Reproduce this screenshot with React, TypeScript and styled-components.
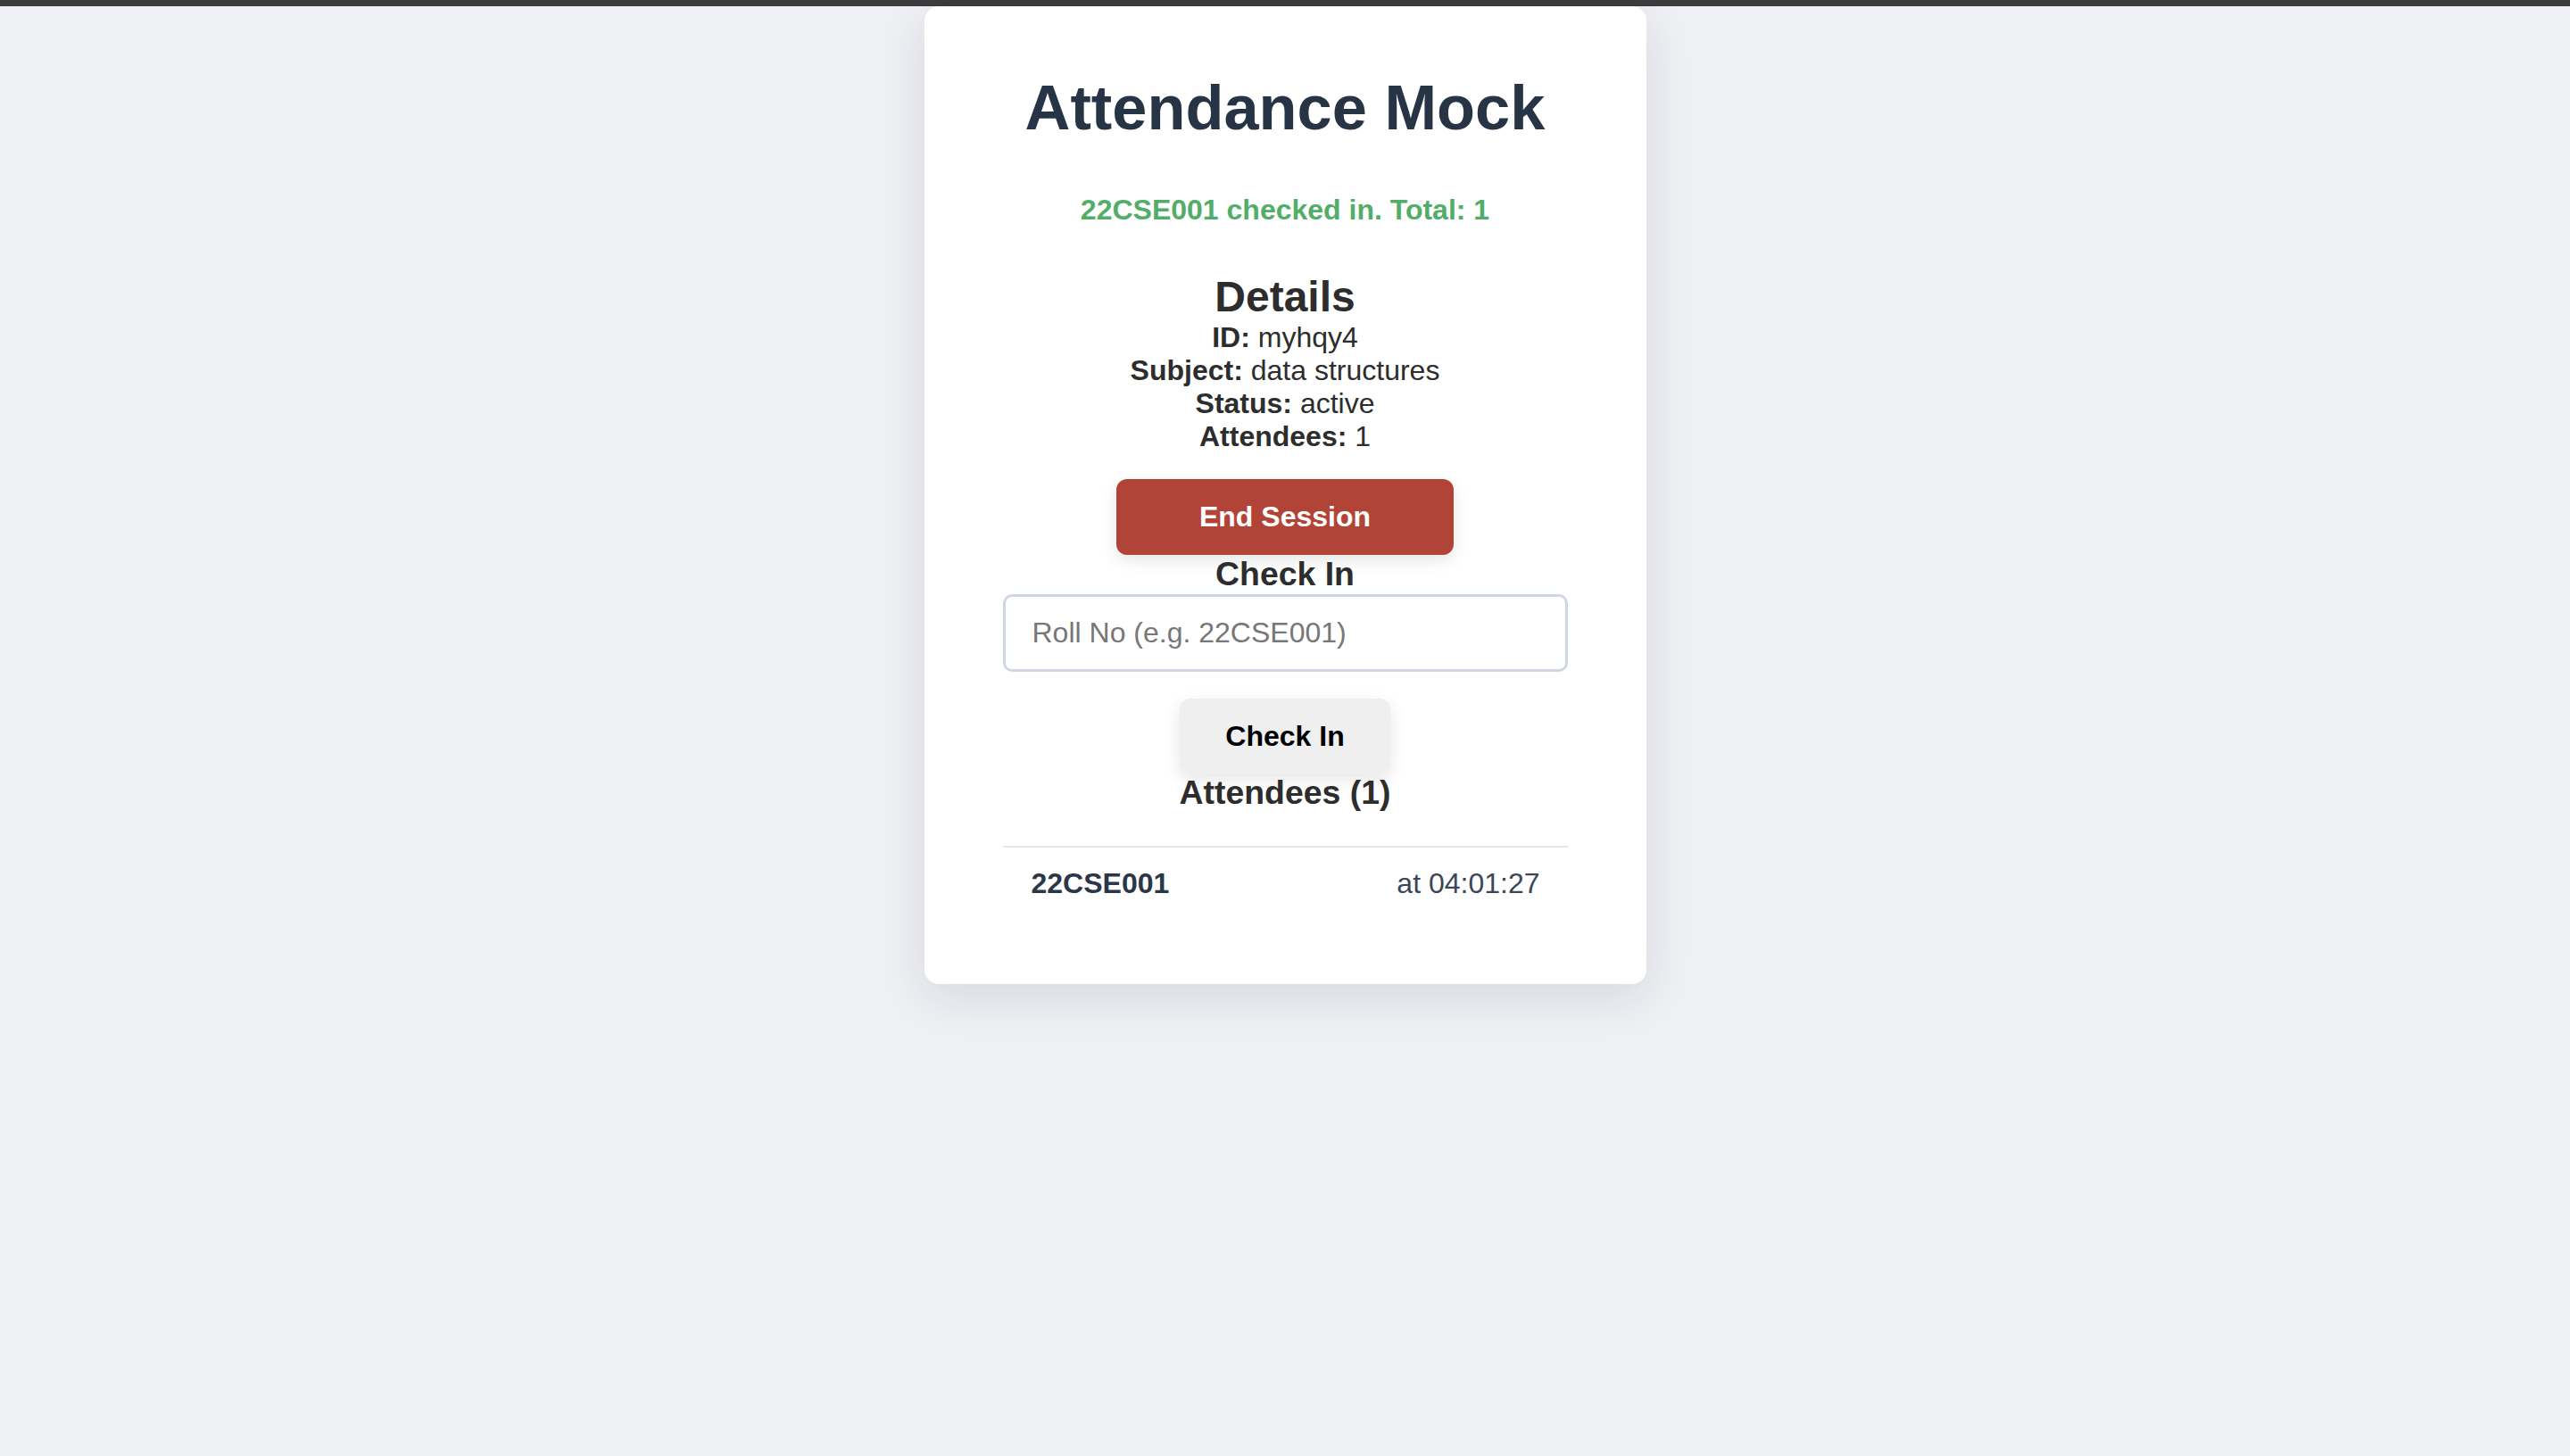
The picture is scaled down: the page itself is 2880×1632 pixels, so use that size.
import React from "react";
import styled, { createGlobalStyle } from "styled-components";

const Global = createGlobalStyle`
  html, body {
    margin: 0;
    padding: 0;
    background: #eff0f4;
    font-family: "Liberation Sans", Arial, Helvetica, sans-serif;
  }
  * { box-sizing: border-box; }
`;

const Page = styled.div`
  min-height: 1632px;
  display: flex;
  flex-direction: column;
  align-items: center;
  background: #eff0f4;
`;

const TopBar = styled.div`
  align-self: stretch;
  height: 7px;
  background: #3c3c3c;
`;

const Card = styled.main`
  width: 809px;
  background: #ffffff;
  border-radius: 16px;
  box-shadow: 0 14px 52px rgba(20, 30, 50, 0.11);
  padding: 73px 88px 72px;
  display: flex;
  flex-direction: column;
  align-items: center;
  text-align: center;
  color: #2d2d2d;
`;

const Title = styled.h1`
  margin: 0;
  font-size: 70.4px;
  font-weight: 700;
  line-height: normal;
  color: #263445;
`;

const Message = styled.p`
  margin: 56px 0 0;
  font-size: 32px;
  font-weight: 700;
  line-height: normal;
  color: #52ad69;
`;

const SectionTitle = styled.h2`
  margin: 51px 0 0;
  font-size: 48px;
  font-weight: 700;
  line-height: normal;
  color: #2d2d2d;
`;

const DetailLine = styled.p`
  margin: 0;
  font-size: 32px;
  line-height: normal;
  color: #2d2d2d;

  b {
    font-weight: 700;
  }
`;

const SubTitle = styled.h3<{ $top?: number }>`
  margin: ${(p) => p.$top ?? 0}px 0 0;
  font-size: 37.4px;
  font-weight: 700;
  line-height: normal;
  color: #2d2d2d;
`;

const Button = styled.button<{ $variant: "danger" | "plain"; $width: number; $top: number }>`
  margin-top: ${(p) => p.$top}px;
  width: ${(p) => p.$width}px;
  height: 85px;
  border: none;
  border-radius: 12px;
  font-family: inherit;
  font-size: 32px;
  font-weight: 700;
  cursor: pointer;
  background: ${(p) => (p.$variant === "danger" ? "#b24437" : "#efefef")};
  color: ${(p) => (p.$variant === "danger" ? "#ffffff" : "#000000")};
  box-shadow: 0 6px 18px rgba(0, 0, 0, 0.1);
`;

const Input = styled.input`
  margin-top: 1px;
  width: 100%;
  height: 87px;
  border: 3px solid #cfd8e2;
  border-radius: 10px;
  padding: 0 30px;
  font-family: inherit;
  font-size: 32px;
  color: #222;
  outline: none;

  &::placeholder {
    color: #777777;
  }
`;

const List = styled.ul`
  list-style: none;
  margin: 38px 0 0;
  padding: 0;
  width: 100%;
  border-top: 2px solid #e2e7ec;
`;

const Row = styled.li`
  display: flex;
  justify-content: space-between;
  align-items: center;
  padding: 22px 31px 22px 32px;
  font-size: 32px;
  line-height: normal;
`;

const RollNo = styled.span`
  font-weight: 700;
  color: #2b3648;
`;

const Time = styled.span`
  color: #3b4759;
`;

export default function App() {
  return (
    <>
      <Global />
      <Page>
        <TopBar />
        <Card>
          <Title>Attendance Mock</Title>
          <Message>22CSE001 checked in. Total: 1</Message>
          <SectionTitle>Details</SectionTitle>
          <DetailLine>
            <b>ID:</b> myhqy4
          </DetailLine>
          <DetailLine>
            <b>Subject:</b> data structures
          </DetailLine>
          <DetailLine>
            <b>Status:</b> active
          </DetailLine>
          <DetailLine>
            <b>Attendees:</b> 1
          </DetailLine>
          <Button $variant="danger" $width={378} $top={29}>
            End Session
          </Button>
          <SubTitle>Check In</SubTitle>
          <Input placeholder="Roll No (e.g. 22CSE001)" />
          <Button $variant="plain" $width={236} $top={30}>
            Check In
          </Button>
          <SubTitle $top={-1}>Attendees (1)</SubTitle>
          <List>
            <Row>
              <RollNo>22CSE001</RollNo>
              <Time>at 04:01:27</Time>
            </Row>
          </List>
        </Card>
      </Page>
    </>
  );
}
